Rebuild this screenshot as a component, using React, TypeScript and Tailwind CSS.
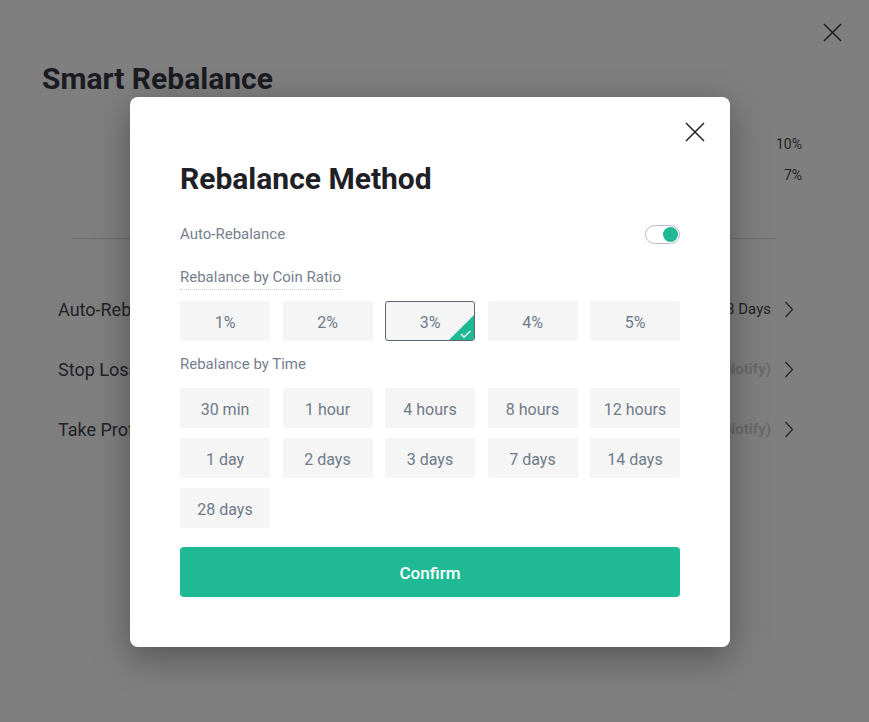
import React from "react";

const coinRatios = ["1%", "2%", "3%", "4%", "5%"];
const times = [
  "30 min",
  "1 hour",
  "4 hours",
  "8 hours",
  "12 hours",
  "1 day",
  "2 days",
  "3 days",
  "7 days",
  "14 days",
  "28 days",
];

const CloseIcon = ({ size, color }: { size: number; color: string }) => (
  <svg width={size} height={size} viewBox="0 0 20 20" fill="none">
    <path d="M1 1L19 19M19 1L1 19" stroke={color} strokeWidth="1.5" />
  </svg>
);

const Chevron = () => (
  <svg width="10" height="17" viewBox="0 0 10 17" fill="none">
    <path d="M1.5 1L8.5 8.5L1.5 16" stroke="#232323" strokeWidth="1.2" />
  </svg>
);

const Option = ({ label, selected }: { label: string; selected?: boolean }) => (
  <div
    className={
      selected
        ? "relative h-[40px] flex items-center justify-center pt-[3px] rounded-[3px] border border-[#5e6673] bg-[#f5f5f5] text-[16px] text-[#707a8a] overflow-hidden"
        : "relative h-[40px] flex items-center justify-center pt-[3px] rounded-[2px] bg-[#f5f5f5] text-[16px] text-[#707a8a]"
    }
  >
    {label}
    {selected && (
      <svg
        className="absolute right-0 bottom-0"
        width="25"
        height="25"
        viewBox="0 0 25 25"
      >
        <polygon points="25,0 25,25 0,25" fill="#1fb995" />
        <path
          d="M12 19L15 22L21.5 16"
          stroke="#ffffff"
          strokeWidth="1.3"
          fill="none"
        />
      </svg>
    )}
  </div>
);

const BackRow = ({ left, right, faded }: { left: string; right: string; faded?: boolean }) => (
  <div className="h-[60px] flex items-center justify-between pl-[58px] pr-[75px]">
    <span className="text-[18px] text-[#222226]">{left}</span>
    <div className="flex items-center gap-[13px]">
      <span
        className={
          faded
            ? "text-[15px] font-bold text-[#6a6a6a]"
            : "text-[15px] text-[#222226]"
        }
      >
        {right}
      </span>
      <Chevron />
    </div>
  </div>
);

export default function App() {
  return (
    <div
      className="relative w-full h-[722px] bg-[#7f7f7f] overflow-hidden"
      style={{ fontFamily: "Roboto, 'Liberation Sans', sans-serif" }}
    >
      {/* page behind the dialog */}
      <div className="flex flex-col pt-[23px]">
        <div className="flex justify-end pr-[27px]">
          <CloseIcon size={19} color="#1a1a1f" />
        </div>
        <h1 className="mt-[18px] pl-[42px] text-[30px] leading-[38px] font-bold text-[#1b1b22]">
          Smart Rebalance
        </h1>
        <div className="mt-[36px] flex flex-col items-end gap-[11px] pr-[67px] text-[14px] leading-[20px] text-[#1f1f24]">
          <span>10%</span>
          <span>7%</span>
        </div>
        <div className="mt-[53px] ml-[72px] mr-[93px] h-px bg-[#6c6c6c]" />
        <div className="mt-[40px] flex flex-col">
          <BackRow left="Auto-Rebalance" right="28 Days" />
          <BackRow left="Stop Loss" right="(Notify)" faded />
          <BackRow left="Take Profit" right="(Notify)" faded />
        </div>
      </div>

      {/* dialog */}
      <div className="absolute left-[130px] top-[97px] w-[600px] bg-white rounded-[8px] shadow-[0_10px_36px_rgba(0,0,0,0.35)] px-[50px] pt-[63px] pb-[50px]">
        <button className="absolute top-[25px] right-[25px]">
          <CloseIcon size={20} color="#1e2026" />
        </button>
        <h2 className="text-[30px] leading-[38px] font-bold text-[#1e2026]">
          Rebalance Method
        </h2>
        <div className="mt-[26px] h-[20px] flex items-center justify-between">
          <span className="text-[15px] text-[#76808f]">Auto-Rebalance</span>
          <div className="w-[35px] h-[19px] rounded-full border border-[#b7bdc6] flex items-center justify-end pr-px">
            <div className="w-[15px] h-[15px] rounded-full bg-[#1fb995]" />
          </div>
        </div>
        <div className="mt-[23px] flex">
          <span className="text-[15px] leading-[20px] text-[#76808f] pb-[2px] border-b border-dotted border-[#c5cad1]">
            Rebalance by Coin Ratio
          </span>
        </div>
        <div className="mt-[11px] grid grid-cols-5 gap-x-[12.5px]">
          {coinRatios.map((r) => (
            <Option key={r} label={r} selected={r === "3%"} />
          ))}
        </div>
        <div className="mt-[13px] text-[15px] leading-[20px] text-[#76808f]">
          Rebalance by Time
        </div>
        <div className="mt-[14px] grid grid-cols-5 gap-x-[12.5px] gap-y-[10px]">
          {times.map((t) => (
            <Option key={t} label={t} />
          ))}
        </div>
        <button className="mt-[19px] w-full h-[50px] pt-[3px] rounded-[4px] bg-[#1fb995] text-white text-[17px] font-medium">
          Confirm
        </button>
      </div>
    </div>
  );
}
